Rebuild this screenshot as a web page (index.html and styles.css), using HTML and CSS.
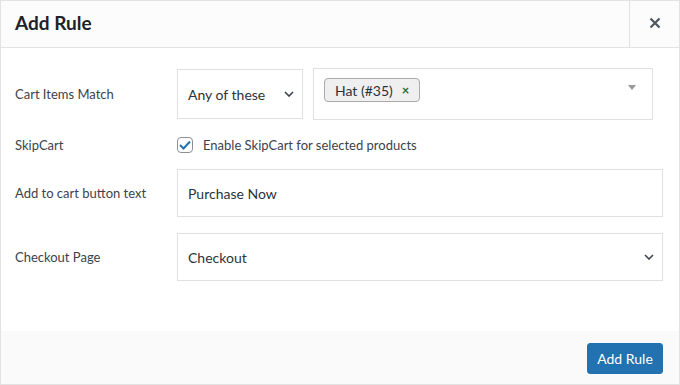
FILE: index.html
```html
<!DOCTYPE html>
<html lang="en">
<head>
    <meta charset="UTF-8">
    <title>Add Rule</title>
    <link rel="stylesheet" href="styles.css">
</head>
<body>
    <div class="modal">
        <div class="modal-header">
            <h1 class="modal-title">Add Rule</h1>
            <button class="close-btn" aria-label="Close">
                <svg width="12" height="12" viewBox="0 0 12 12"><path d="M1.5 1.5 L10.5 10.5 M10.5 1.5 L1.5 10.5" stroke="#50575e" stroke-width="2.2" fill="none"/></svg>
            </button>
        </div>

        <div class="modal-body">
            <div class="form-row row-match">
                <label class="form-label">Cart Items Match</label>
                <div class="form-field match-field">
                    <div class="select small-select">
                        <span>Any of these</span>
                        <svg class="chevron" width="10" height="6" viewBox="0 0 10 6"><path d="M1 1 L5 5 L9 1" stroke="#3c434a" stroke-width="1.6" fill="none"/></svg>
                    </div>
                    <div class="multi-select">
                        <span class="tag">Hat (#35) <span class="tag-remove">×</span></span>
                        <span class="multi-arrow"></span>
                    </div>
                </div>
            </div>

            <div class="form-row row-check">
                <label class="form-label">SkipCart</label>
                <div class="form-field check-field">
                    <span class="checkbox">
                        <svg width="12" height="10" viewBox="0 0 12 10"><path d="M1 5 L4.5 8.5 L11 1.5" stroke="#2271b1" stroke-width="2" fill="none"/></svg>
                    </span>
                    <span class="check-text">Enable SkipCart for selected products</span>
                </div>
            </div>

            <div class="form-row row-input">
                <label class="form-label">Add to cart button text</label>
                <div class="form-field">
                    <div class="text-input">Purchase Now</div>
                </div>
            </div>

            <div class="form-row row-input">
                <label class="form-label">Checkout Page</label>
                <div class="form-field">
                    <div class="select wide-select">
                        <span>Checkout</span>
                        <svg class="chevron" width="10" height="6" viewBox="0 0 10 6"><path d="M1 1 L5 5 L9 1" stroke="#3c434a" stroke-width="1.6" fill="none"/></svg>
                    </div>
                </div>
            </div>
        </div>

        <div class="modal-footer">
            <button class="primary-btn">Add Rule</button>
        </div>
    </div>
</body>
</html>
```

FILE: styles.css
```css
* {
    box-sizing: border-box;
    margin: 0;
    padding: 0;
}

body {
    background-color: #fff;
    font-family: 'Segoe UI', Lato, sans-serif;
    color: #3c434a;
}

.modal {
    width: 680px;
    height: 385px;
    border: 1px solid #e2e2e2;
    display: flex;
    flex-direction: column;
    background-color: #fff;
}

.modal-header {
    display: flex;
    align-items: stretch;
    height: 47px;
    background-color: #fcfcfc;
    border-bottom: 1px solid #e2e2e2;
}

.modal-title {
    flex: 1;
    font-size: 19px;
    font-weight: 700;
    color: #1d2327;
    padding-left: 14px;
    line-height: 44px;
}

.close-btn {
    width: 50px;
    border: none;
    border-left: 1px solid #e2e2e2;
    background: transparent;
    display: flex;
    align-items: center;
    justify-content: center;
    padding-bottom: 2px;
}

.modal-body {
    flex: 1;
    padding: 20px 16px 0 14px;
}

.form-row {
    display: flex;
    align-items: center;
}

.form-label {
    width: 162px;
    font-size: 13px;
    color: #3c434a;
}

.form-field {
    flex: 1;
}

.row-match {
    height: 52px;
    margin-bottom: 16px;
}

.match-field {
    display: flex;
    align-items: center;
    gap: 10px;
    padding-right: 10px;
}

.select {
    display: flex;
    align-items: center;
    justify-content: space-between;
    border: 1px solid #e0e0e0;
    background-color: #fff;
    font-size: 14px;
    color: #2c3338;
    padding: 0 8px 0 10px;
}

.small-select {
    width: 126px;
    height: 50px;
}

.wide-select {
    height: 48px;
}

.multi-select {
    flex: 1;
    height: 52px;
    border: 1px solid #e0e0e0;
    padding: 9px 10px;
    display: flex;
    justify-content: space-between;
}

.tag {
    display: inline-flex;
    align-items: center;
    height: 24px;
    padding: 0 10px;
    background-color: #efefef;
    border: 1px solid #aaa;
    border-radius: 4px;
    font-size: 14px;
    color: #2c3338;
}

.tag-remove {
    color: #1e6b33;
    font-weight: 700;
    font-size: 13px;
    margin-left: 9px;
}

.multi-arrow {
    width: 0;
    height: 0;
    margin-top: 7px;
    margin-right: 6px;
    border-left: 4px solid transparent;
    border-right: 4px solid transparent;
    border-top: 5px solid #999;
}

.row-check {
    height: 18px;
    margin-bottom: 15px;
}

.check-field {
    display: flex;
    align-items: center;
    gap: 10px;
}

.checkbox {
    width: 16px;
    height: 16px;
    border: 1px solid #8c8f94;
    border-radius: 4px;
    display: flex;
    align-items: center;
    justify-content: center;
}

.check-text {
    font-size: 13px;
    color: #3c434a;
}

.row-input {
    height: 48px;
    margin-bottom: 16px;
}

.text-input {
    height: 48px;
    border: 1px solid #e0e0e0;
    padding: 0 10px;
    display: flex;
    align-items: center;
    font-size: 14px;
    color: #2c3338;
}

.modal-footer {
    height: 53px;
    background-color: #fafafa;
    display: flex;
    justify-content: flex-end;
    align-items: center;
    padding: 2px 16px 0 0;
}

.primary-btn {
    width: 76px;
    height: 31px;
    background-color: #2271b1;
    border: 1px solid #2271b1;
    border-radius: 3px;
    color: #fff;
    font-family: 'Segoe UI', Lato, sans-serif;
    font-size: 14px;
}
```
